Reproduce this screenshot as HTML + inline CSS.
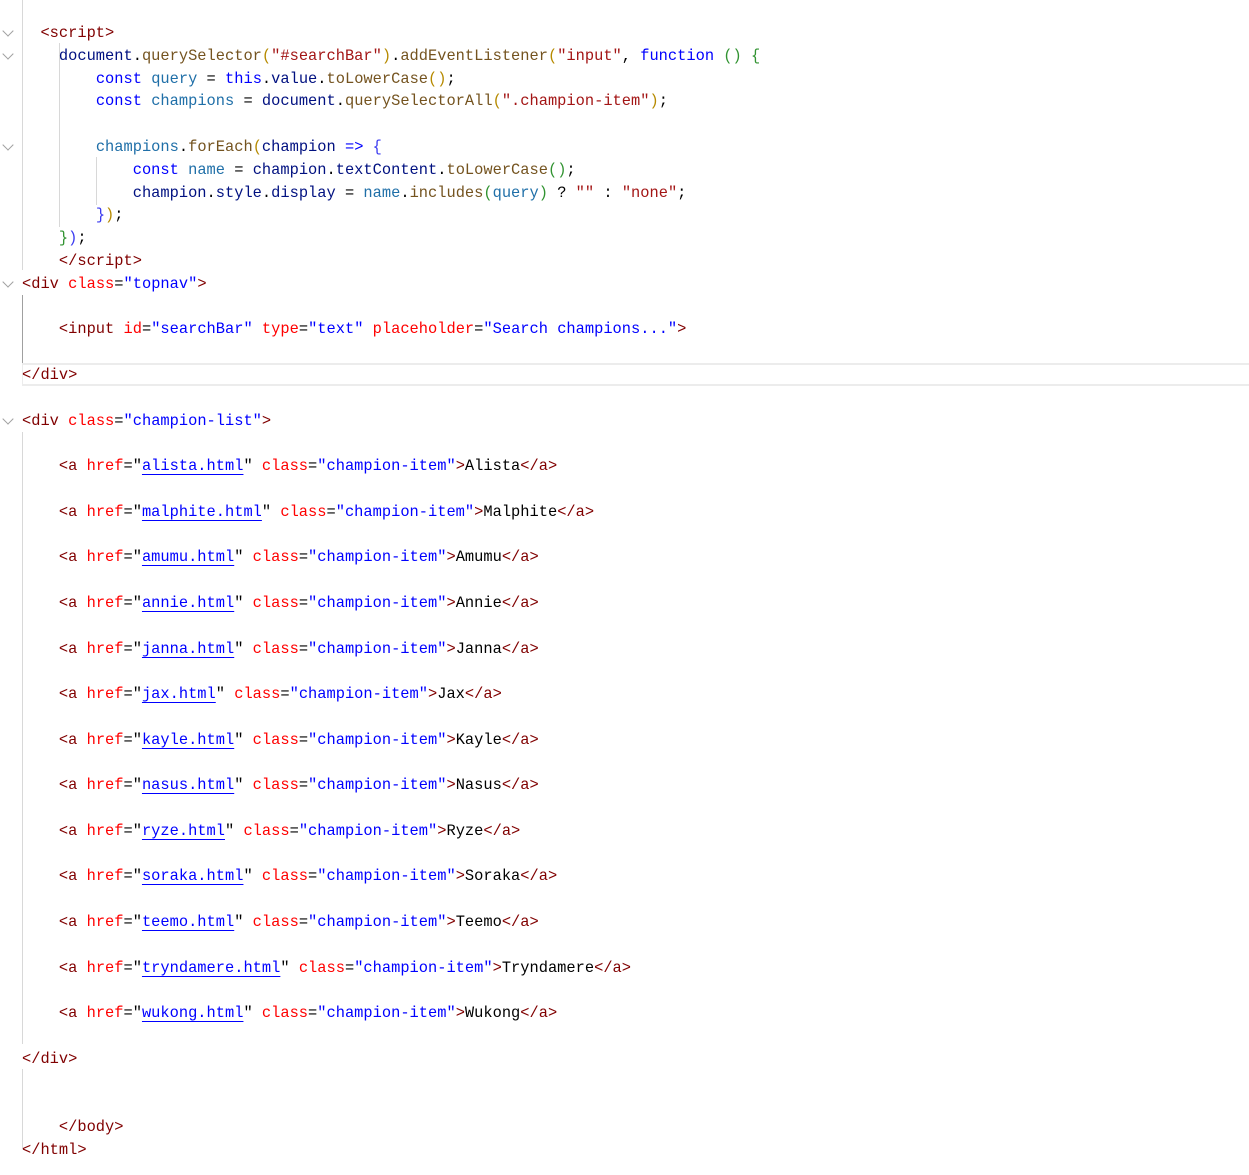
<!DOCTYPE html>
<html><head><meta charset="utf-8"><style>
html,body{margin:0;padding:0;background:#fff;width:1249px;height:1175px;overflow:hidden;position:relative}
.code{position:absolute;left:22px;top:22px;font-family:"Liberation Mono",monospace;font-size:15.38px;line-height:22.8px;white-space:normal;color:#000}
.code div{height:22.8px;white-space:pre}
.t{color:#800000}.a{color:#ff0000}.v{color:#0000ff}
.l{color:#0000ff;text-decoration:underline;text-underline-offset:4px;text-decoration-thickness:1px}
.k{color:#0000ff}.s{color:#a31515}.m{color:#74531f}.d{color:#001080}.q{color:#1f6fa8}
.b1{color:#b68a00}.b2{color:#3a3af0}.b3{color:#319331}
.g{position:absolute;width:1px;background:#d8d8d8}
.chev{position:absolute;left:4px;width:7px;height:7px;border-right:1px solid #a0a0a0;border-bottom:1px solid #a0a0a0;transform:rotate(45deg)}
.cur{position:absolute;left:22px;top:363px;width:1227px;height:19px;border-top:2px solid #ececec;border-bottom:2px solid #ececec;border-left:1px solid #ececec}
</style></head><body>
<div class="cur"></div>
<div class="g" style="left:22px;top:0;height:270px"></div>
<div class="g" style="left:59px;top:43px;height:184px"></div>
<div class="g" style="left:96px;top:157px;height:48px"></div>
<div class="g" style="left:22px;top:295px;height:68px;background:#a0a0a0"></div>
<div class="g" style="left:22px;top:432px;height:612px"></div>
<div class="g" style="left:22px;top:1069px;height:80px"></div>
<div class="chev" style="top:27px"></div>
<div class="chev" style="top:50px"></div>
<div class="chev" style="top:141px"></div>
<div class="chev" style="top:278px"></div>
<div class="chev" style="top:415px"></div>
<div class="code">
<div>  <span class="t">&lt;script&gt;</span></div>
<div>    <span class="d">document</span>.<span class="m">querySelector</span><span class="b1">(</span><span class="s">"#searchBar"</span><span class="b1">)</span>.<span class="m">addEventListener</span><span class="b1">(</span><span class="s">"input"</span>, <span class="k">function</span> <span class="b3">()</span> <span class="b3">{</span></div>
<div>        <span class="k">const</span> <span class="q">query</span> = <span class="k">this</span>.<span class="d">value</span>.<span class="m">toLowerCase</span><span class="b1">()</span>;</div>
<div>        <span class="k">const</span> <span class="q">champions</span> = <span class="d">document</span>.<span class="m">querySelectorAll</span><span class="b1">(</span><span class="s">".champion-item"</span><span class="b1">)</span>;</div>
<div></div>
<div>        <span class="q">champions</span>.<span class="m">forEach</span><span class="b1">(</span><span class="d">champion</span> <span class="k">=&gt;</span> <span class="b2">{</span></div>
<div>            <span class="k">const</span> <span class="q">name</span> = <span class="d">champion</span>.<span class="d">textContent</span>.<span class="m">toLowerCase</span><span class="b3">()</span>;</div>
<div>            <span class="d">champion</span>.<span class="d">style</span>.<span class="d">display</span> = <span class="q">name</span>.<span class="m">includes</span><span class="b3">(</span><span class="q">query</span><span class="b3">)</span> ? <span class="s">""</span> : <span class="s">"none"</span>;</div>
<div>        <span class="b2">}</span><span class="b1">)</span>;</div>
<div>    <span class="b3">}</span><span class="b2">)</span>;</div>
<div>    <span class="t">&lt;/script&gt;</span></div>
<div><span class="t">&lt;div</span> <span class="a">class</span>=<span class="v">"topnav"</span><span class="t">&gt;</span></div>
<div></div>
<div>    <span class="t">&lt;input</span> <span class="a">id</span>=<span class="v">"searchBar"</span> <span class="a">type</span>=<span class="v">"text"</span> <span class="a">placeholder</span>=<span class="v">"Search champions..."</span><span class="t">&gt;</span></div>
<div></div>
<div><span class="t">&lt;/div&gt;</span></div>
<div></div>
<div><span class="t">&lt;div</span> <span class="a">class</span>=<span class="v">"champion-list"</span><span class="t">&gt;</span></div>
<div></div>
<div>    <span class="t">&lt;a</span> <span class="a">href</span>="<span class="l">alista.html</span>" <span class="a">class</span>=<span class="v">"champion-item"</span><span class="t">&gt;</span>Alista<span class="t">&lt;/a&gt;</span></div>
<div></div>
<div>    <span class="t">&lt;a</span> <span class="a">href</span>="<span class="l">malphite.html</span>" <span class="a">class</span>=<span class="v">"champion-item"</span><span class="t">&gt;</span>Malphite<span class="t">&lt;/a&gt;</span></div>
<div></div>
<div>    <span class="t">&lt;a</span> <span class="a">href</span>="<span class="l">amumu.html</span>" <span class="a">class</span>=<span class="v">"champion-item"</span><span class="t">&gt;</span>Amumu<span class="t">&lt;/a&gt;</span></div>
<div></div>
<div>    <span class="t">&lt;a</span> <span class="a">href</span>="<span class="l">annie.html</span>" <span class="a">class</span>=<span class="v">"champion-item"</span><span class="t">&gt;</span>Annie<span class="t">&lt;/a&gt;</span></div>
<div></div>
<div>    <span class="t">&lt;a</span> <span class="a">href</span>="<span class="l">janna.html</span>" <span class="a">class</span>=<span class="v">"champion-item"</span><span class="t">&gt;</span>Janna<span class="t">&lt;/a&gt;</span></div>
<div></div>
<div>    <span class="t">&lt;a</span> <span class="a">href</span>="<span class="l">jax.html</span>" <span class="a">class</span>=<span class="v">"champion-item"</span><span class="t">&gt;</span>Jax<span class="t">&lt;/a&gt;</span></div>
<div></div>
<div>    <span class="t">&lt;a</span> <span class="a">href</span>="<span class="l">kayle.html</span>" <span class="a">class</span>=<span class="v">"champion-item"</span><span class="t">&gt;</span>Kayle<span class="t">&lt;/a&gt;</span></div>
<div></div>
<div>    <span class="t">&lt;a</span> <span class="a">href</span>="<span class="l">nasus.html</span>" <span class="a">class</span>=<span class="v">"champion-item"</span><span class="t">&gt;</span>Nasus<span class="t">&lt;/a&gt;</span></div>
<div></div>
<div>    <span class="t">&lt;a</span> <span class="a">href</span>="<span class="l">ryze.html</span>" <span class="a">class</span>=<span class="v">"champion-item"</span><span class="t">&gt;</span>Ryze<span class="t">&lt;/a&gt;</span></div>
<div></div>
<div>    <span class="t">&lt;a</span> <span class="a">href</span>="<span class="l">soraka.html</span>" <span class="a">class</span>=<span class="v">"champion-item"</span><span class="t">&gt;</span>Soraka<span class="t">&lt;/a&gt;</span></div>
<div></div>
<div>    <span class="t">&lt;a</span> <span class="a">href</span>="<span class="l">teemo.html</span>" <span class="a">class</span>=<span class="v">"champion-item"</span><span class="t">&gt;</span>Teemo<span class="t">&lt;/a&gt;</span></div>
<div></div>
<div>    <span class="t">&lt;a</span> <span class="a">href</span>="<span class="l">tryndamere.html</span>" <span class="a">class</span>=<span class="v">"champion-item"</span><span class="t">&gt;</span>Tryndamere<span class="t">&lt;/a&gt;</span></div>
<div></div>
<div>    <span class="t">&lt;a</span> <span class="a">href</span>="<span class="l">wukong.html</span>" <span class="a">class</span>=<span class="v">"champion-item"</span><span class="t">&gt;</span>Wukong<span class="t">&lt;/a&gt;</span></div>
<div></div>
<div><span class="t">&lt;/div&gt;</span></div>
<div></div>
<div></div>
<div>    <span class="t">&lt;/body&gt;</span></div>
<div><span class="t">&lt;/html&gt;</span></div>
</div>
</body></html>
